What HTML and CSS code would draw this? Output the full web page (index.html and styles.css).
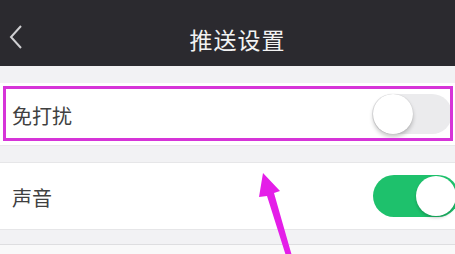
FILE: index.html
```html
<!DOCTYPE html>
<html lang="zh">
<head>
<meta charset="utf-8">
<link rel="stylesheet" href="styles.css">
</head>
<body>
<div class="page">
  <header class="navbar">
    <svg class="back" width="14" height="26" viewBox="0 0 14 26"><path d="M12 2 L2 13 L12 24" fill="none" stroke="#cfcfd2" stroke-width="2"/></svg>
    <h1 class="title">推送设置</h1>
  </header>
  <div class="gap gap-top"></div>
  <section class="cell cell-dnd">
    <span class="label">免打扰</span>
    <span class="switch switch-off"><span class="knob"></span></span>
    <div class="highlight"></div>
  </section>
  <div class="gap gap-mid"></div>
  <section class="cell cell-sound">
    <span class="label">声音</span>
    <span class="switch switch-on"><span class="knob"></span></span>
  </section>
  <div class="gap gap-bottom"></div>
  <div class="rest"></div>
  <svg class="arrow" width="455" height="254" viewBox="0 0 455 254"><polygon points="263,173 280,191 274,193 292,256 286,256 267,196 259,197" fill="#e41ee8"/></svg>
</div>
</body>
</html>
```
FILE: styles.css
```css
* { box-sizing: border-box; }
html, body { margin: 0; padding: 0; }
body {
  width: 455px;
  height: 254px;
  overflow: hidden;
  background: #f7f7f8;
  font-family: "Noto Sans CJK SC", "Noto Sans", sans-serif;
}
.page {
  position: relative;
  width: 455px;
  height: 254px;
  display: flex;
  flex-direction: column;
}
.navbar {
  height: 66px;
  flex: none;
  background: #2b2a2f;
  display: flex;
  align-items: center;
  justify-content: center;
  position: relative;
  padding-top: 12px;
}
.back {
  position: absolute;
  left: 9px;
  top: 24px;
}
.title {
  margin: 0;
  font-weight: 400;
  font-size: 23px;
  color: #f2f2f2;
  letter-spacing: 1px;
  padding-left: 20px;
}
.gap { flex: none; background: #f2f2f4; }
.gap-top { height: 17px; }
.gap-mid { height: 18px; border-top: 1px solid #e9e9eb; border-bottom: 1px solid #e6e6e8; }
.gap-bottom { height: 16px; border-top: 1px solid #e6e6e8; border-bottom: 1px solid #dedee0; }
.rest { flex: 1; background: #f9f9f9; }
.cell {
  flex: none;
  background: #ffffff;
  display: flex;
  align-items: center;
  justify-content: space-between;
  padding-left: 12px;
  position: relative;
}
.cell-dnd { height: 62px; padding-right: 3px; }
.cell-sound { height: 66px; padding-right: 0; }
.label {
  font-size: 20px;
  color: #404040;
  line-height: 1;
}
.cell-dnd .label { margin-top: 4px; }
.cell-sound .label { margin-top: 3px; }
.switch {
  position: relative;
  width: 80px;
  height: 40px;
  border-radius: 20px;
  display: block;
}
.switch-off {
  background: #ebebed;
}
.switch-on {
  background: #1ec16c;
  margin-right: -4px;
  width: 86px;
  height: 42px;
  border-radius: 21px;
}
.knob {
  position: absolute;
  top: 0;
  width: 40px;
  height: 40px;
  border-radius: 50%;
  background: #ffffff;
  box-shadow: 0 3px 4px rgba(0,0,0,0.22), 0 0 1px rgba(0,0,0,0.2);
}
.switch-off .knob { left: 1px; }
.switch-on .knob { right: 3px; top: 1px; box-shadow: 0 2px 3px rgba(0,0,0,0.2); }
.highlight {
  position: absolute;
  left: 3px;
  right: 2px;
  top: 3px;
  bottom: 4px;
  border: 3px solid #d634d8;
  pointer-events: none;
}
.arrow {
  position: absolute;
  left: 0;
  top: 0;
  pointer-events: none;
}
```
